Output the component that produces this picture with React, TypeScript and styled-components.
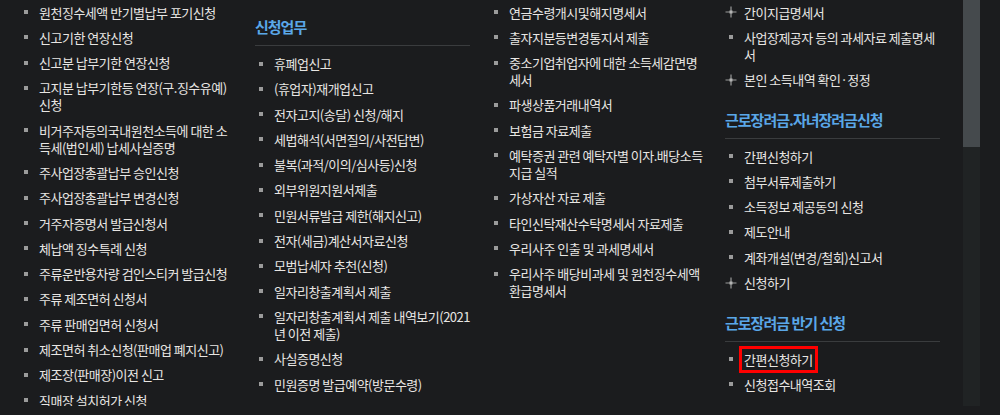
import React from "react"
import styled, { createGlobalStyle } from "styled-components"

const GlobalStyle = createGlobalStyle`
    html, body {
        margin: 0;
        padding: 0;
        background: #1b1c1e;
        color: #e8e6e3;
        font-family: "Noto Sans CJK KR", "Noto Sans", sans-serif;
    }
    ul {
        margin: 0;
        padding: 0;
        list-style: none;
    }
`

type Item = { label: string; plus?: boolean; marked?: boolean }
type Section = { title?: string; items: Item[] }
type Column = { offset: number; sections: Section[] }

const columns: Column[] = [
    {
        offset: 3.5,
        sections: [
            {
                items: [
                    { label: "원천징수세액 반기별납부 포기신청" },
                    { label: "신고기한 연장신청" },
                    { label: "신고분 납부기한 연장신청" },
                    { label: "고지분 납부기한등 연장(구.징수유예)\n신청" },
                    { label: "비거주자등의국내원천소득에 대한 소\n득세(법인세) 납세사실증명" },
                    { label: "주사업장총괄납부 승인신청" },
                    { label: "주사업장총괄납부 변경신청" },
                    { label: "거주자증명서 발급신청서" },
                    { label: "체납액 징수특례 신청" },
                    { label: "주류운반용차량 검인스티커 발급신청" },
                    { label: "주류 제조면허 신청서" },
                    { label: "주류 판매업면허 신청서" },
                    { label: "제조면허 취소신청(판매업 폐지신고)" },
                    { label: "제조장(판매장)이전 신고" },
                    { label: "직매장 설치허가 신청" },
                ],
            },
        ],
    },
    {
        offset: 17,
        sections: [
            {
                title: "신청업무",
                items: [
                    { label: "휴폐업신고" },
                    { label: "(휴업자)재개업신고" },
                    { label: "전자고지(송달) 신청/해지" },
                    { label: "세법해석(서면질의/사전답변)" },
                    { label: "불복(과적/이의/심사등)신청" },
                    { label: "외부위원지원서제출" },
                    { label: "민원서류발급 제한(해지신고)" },
                    { label: "전자(세금)계산서자료신청" },
                    { label: "모범납세자 추천(신청)" },
                    { label: "일자리창출계획서 제출" },
                    { label: "일자리창출계획서 제출 내역보기(2021\n년 이전 제출)" },
                    { label: "사실증명신청" },
                    { label: "민원증명 발급예약(방문수령)" },
                ],
            },
        ],
    },
    {
        offset: 3.5,
        sections: [
            {
                items: [
                    { label: "연금수령개시및해지명세서" },
                    { label: "출자지분등변경통지서 제출" },
                    { label: "중소기업취업자에 대한 소득세감면명\n세서" },
                    { label: "파생상품거래내역서" },
                    { label: "보험금 자료제출" },
                    { label: "예탁증권 관련 예탁자별 이자.배당소득\n지급 실적" },
                    { label: "가상자산 자료 제출" },
                    { label: "타인신탁재산수탁명세서 자료제출" },
                    { label: "우리사주 인출 및 과세명세서" },
                    { label: "우리사주 배당비과세 및 원천징수세액\n환급명세서" },
                ],
            },
        ],
    },
    {
        offset: 3.5,
        sections: [
            {
                items: [
                    { label: "간이지급명세서", plus: true },
                    { label: "사업장제공자 등의 과세자료 제출명세\n서" },
                    { label: "본인 소득내역 확인·정정", plus: true },
                ],
            },
            {
                title: "근로장려금.자녀장려금신청",
                items: [
                    { label: "간편신청하기" },
                    { label: "첨부서류제출하기" },
                    { label: "소득정보 제공동의 신청" },
                    { label: "제도안내" },
                    { label: "계좌개설(변경/철회)신고서" },
                    { label: "신청하기", plus: true },
                ],
            },
            {
                title: "근로장려금 반기 신청",
                items: [{ label: "간편신청하기", marked: true }, { label: "신청접수내역조회" }],
            },
        ],
    },
]

const Screen = styled.div`
    display: flex;
    width: 1000px;
    height: 406px;
`

const Menu = styled.div`
    flex: 1;
    overflow: hidden;
    display: grid;
    grid-template-columns: repeat(4, 215px);
    column-gap: 20px;
    padding-left: 20px;
    align-items: start;
`

const MenuColumn = styled.div<{ $offset: number }>`
    display: flex;
    flex-direction: column;
    padding-top: ${(p) => p.$offset}px;
`

const Group = styled.div`
    & + & {
        margin-top: 13.2px;
    }
`

const GroupTitle = styled.h3`
    margin: 0 0 9px;
    padding-bottom: 8px;
    border-bottom: 1px solid #3a3c3e;
    font-size: 15px;
    line-height: 20px;
    font-weight: 700;
    letter-spacing: -1px;
    color: #5aa7e8;
`

const Entry = styled.li`
    display: flex;
    align-items: flex-start;
    margin-bottom: 8.3px;
    font-size: 13px;
    line-height: 17px;
    letter-spacing: -0.5px;
    white-space: pre;
`

const Marker = styled.span`
    flex: 0 0 19px;
    height: 17px;
    display: flex;
    align-items: center;
`

const Square = styled.i`
    width: 4px;
    height: 4px;
    margin-left: 4px;
    background: #9b9b9b;
`

const Label = styled.span<{ $marked?: boolean }>`
    outline: ${(p) => (p.$marked ? "3px solid #f00" : "none")};
    outline-offset: 2px;
`

const Scrollbar = styled.div`
    flex: 0 0 17px;
    background: #202324;
`

const Thumb = styled.div`
    height: 147px;
    background: #454a4d;
`

const Gutter = styled.div`
    flex: 0 0 20px;
`

const PlusIcon = () => (
    <svg width="12" height="12" viewBox="0 0 12 12">
        <path d="M6 0.5v11M0.5 6h11" stroke="#9b9b9b" strokeWidth="1.2" />
        <rect x="4.5" y="4.5" width="3" height="3" fill="#b4b4b4" />
    </svg>
)

export default function App() {
    return (
        <>
            <GlobalStyle />
            <Screen>
                <Menu>
                    {columns.map((col, ci) => (
                        <MenuColumn key={ci} $offset={col.offset}>
                            {col.sections.map((sec, si) => (
                                <Group key={si}>
                                    {sec.title && <GroupTitle>{sec.title}</GroupTitle>}
                                    <ul>
                                        {sec.items.map((it, ii) => (
                                            <Entry key={ii}>
                                                <Marker>{it.plus ? <PlusIcon /> : <Square />}</Marker>
                                                <Label $marked={it.marked}>{it.label}</Label>
                                            </Entry>
                                        ))}
                                    </ul>
                                </Group>
                            ))}
                        </MenuColumn>
                    ))}
                </Menu>
                <Scrollbar>
                    <Thumb />
                </Scrollbar>
                <Gutter />
            </Screen>
        </>
    )
}
